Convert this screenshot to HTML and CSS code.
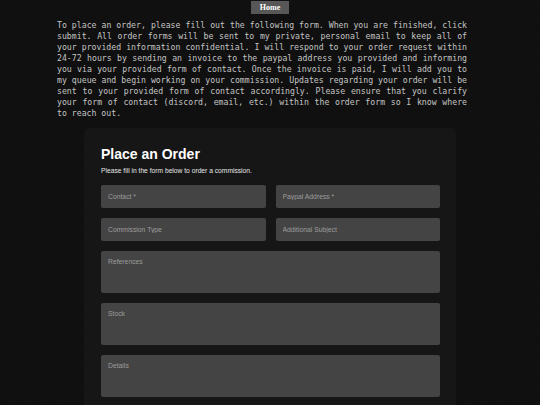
FILE: index.html
```html
<!DOCTYPE html>
<html>
<head>
<meta charset="utf-8">
<link rel="stylesheet" href="styles.css">
</head>
<body>
<nav class="nav"><a class="home" href="#">Home</a></nav>
<p class="intro">To place an order, please fill out the following form. When you are finished, click submit. All order forms will be sent to my private, personal email to keep all of your provided information confidential. I will respond to your order request within 24-72 hours by sending an invoice to the paypal address you provided and informing you via your provided form of contact. Once the invoice is paid, I will add you to my queue and begin working on your commission. Updates regarding your order will be sent to your provided form of contact accordingly. Please ensure that you clarify your form of contact (discord, email, etc.) within the order form so I know where to reach out.</p>
<main class="card">
  <h1 class="title">Place an Order</h1>
  <p class="sub">Please fill in the form below to order a commission.</p>
  <form class="form">
    <div class="row">
      <input class="field" placeholder="Contact *">
      <input class="field" placeholder="Paypal Address *">
    </div>
    <div class="row">
      <input class="field" placeholder="Commission Type">
      <input class="field" placeholder="Additional Subject">
    </div>
    <textarea class="area" placeholder="References"></textarea>
    <textarea class="area" placeholder="Stock"></textarea>
    <textarea class="area" placeholder="Details"></textarea>
  </form>
</main>
</body>
</html>
```
FILE: styles.css
```css
html, body {
  margin: 0;
  padding: 0;
  height: 100%;
  overflow: hidden;
}
body {
  background-color: #0f0f0f;
  background-image: repeating-linear-gradient(45deg, rgba(255,255,255,0.01) 0 1px, transparent 1px 3px);
}
.nav {
  display: flex;
  justify-content: center;
  padding-top: 1px;
}
.home {
  display: block;
  width: 38px;
  height: 13px;
  line-height: 13px;
  text-align: center;
  background: #575757;
  color: #ffffff;
  font-family: "Liberation Serif", serif;
  font-weight: bold;
  font-size: 8px;
  text-decoration: none;
}
.intro {
  width: 410px;
  margin: 6px 0 0 57px;
  font-family: "DejaVu Sans Mono", monospace;
  font-size: 8.2px;
  line-height: 11px;
  color: #c4c4c4;
  text-align: justify;
}
.card {
  width: 339px;
  margin: 9px 0 0 84px;
  padding: 17px 16px 20px 17px;
  background: #161616;
  border-radius: 6px;
  font-family: "Liberation Sans", Arial, sans-serif;
}
.title {
  margin: 0;
  font-size: 14px;
  line-height: 18px;
  font-weight: bold;
  color: #ffffff;
}
.sub {
  margin: 3px 0 0;
  font-size: 6.7px;
  line-height: 9px;
  color: #e6e6e6;
}
.form {
  margin-top: 10px;
  display: flex;
  flex-direction: column;
  gap: 10px;
}
.row {
  display: grid;
  grid-template-columns: 1fr 1fr;
  gap: 10px;
}
.field, .area {
  box-sizing: border-box;
  width: 100%;
  margin: 0;
  border: none;
  outline: none;
  background: #444444;
  border-radius: 2px;
  color: #dddddd;
  font-family: "Liberation Sans", Arial, sans-serif;
  font-size: 6.8px;
}
.field {
  height: 23px;
  padding: 0 7px;
}
.area {
  height: 42px;
  padding: 7px 7px;
  resize: none;
  display: block;
}
.field::placeholder, .area::placeholder {
  color: #9c9c9c;
}
```
